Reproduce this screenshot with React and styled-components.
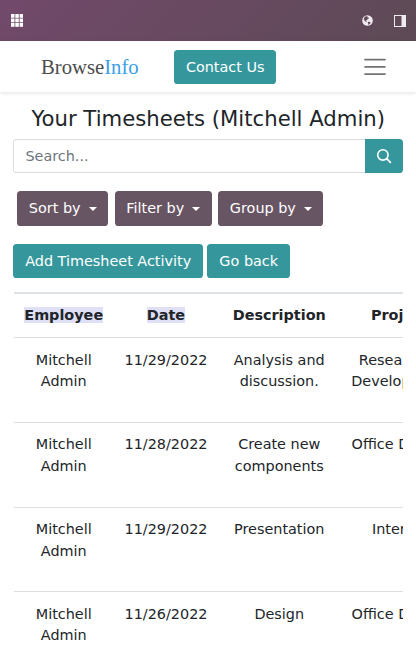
import React from "react";
import styled, { createGlobalStyle } from "styled-components";

const GlobalStyle = createGlobalStyle`
  * { box-sizing: border-box; }
  html, body { margin: 0; height: 657px; overflow: hidden; background: #fff; }
  body {
    font-family: "DejaVu Sans", sans-serif;
    font-size: 14.4px;
    line-height: 21.6px;
    color: #212529;
  }
`;

const Page = styled.div`
  width: 416px;
  height: 657px;
  overflow: hidden;
  display: flex;
  flex-direction: column;
`;

const TopBar = styled.header`
  flex: none;
  height: 41px;
  padding: 0 10px 0 11px;
  display: flex;
  align-items: center;
  justify-content: space-between;
  background: linear-gradient(135deg, #71496a 0%, #71496a 4%, #5d4a56 100%);
  svg { display: block; }
`;

const Tools = styled.div`
  display: flex;
  align-items: center;
  gap: 21px;
`;

const SiteNav = styled.nav`
  flex: none;
  height: 51px;
  padding: 0 30.5px 0 41px;
  display: flex;
  align-items: center;
  box-shadow: 0 1px 4px rgba(0, 0, 0, 0.12);
  svg { display: block; margin-left: auto; }
`;

const Logo = styled.div`
  width: 133px;
  font-family: "Liberation Serif", serif;
  font-size: 20.7px;
  line-height: 24px;
  color: #4d4d4d;
  span { color: #3a9fe5; }
`;

const Button = styled.button`
  height: 34.6px;
  width: ${(p) => p.$width}px;
  padding: 1.6px 0 0;
  border: 0;
  border-radius: 3.6px;
  background: ${(p) => (p.$muted ? "#685563" : "#35979c")};
  color: #fff;
  font: inherit;
  line-height: 21.6px;
  white-space: nowrap;
  display: flex;
  align-items: center;
  justify-content: center;
`;

const ContactButton = styled(Button)`
  margin-top: 1px;
`;

const Caret = styled.span`
  margin: 0 0 1px 8px;
  border: 4px solid transparent;
  border-top-color: #fff;
  border-bottom: 0;
`;

const Main = styled.main`
  padding: 13px 13px 0 13.4px;
  display: flex;
  flex-direction: column;
`;

const Title = styled.h1`
  margin: 0;
  height: 33.6px;
  font-size: 21.2px;
  line-height: 27px;
  font-weight: 400;
  text-align: center;
  white-space: nowrap;
`;

const Search = styled.form`
  display: flex;
  height: 34.6px;
`;

const Input = styled.input`
  flex: 1;
  min-width: 0;
  padding: 1px 11px 0;
  border: 1px solid #d8dde2;
  border-right: 0;
  border-radius: 3.6px 0 0 3.6px;
  font: inherit;
  &::placeholder { color: #6c757d; opacity: 1; }
`;

const SearchButton = styled(Button)`
  padding: 0;
  border-radius: 0 3.6px 3.6px 0;
`;

const Filters = styled.div`
  display: flex;
  gap: 6.6px;
  margin: 17.8px 0 0 3.8px;
`;

const Actions = styled.div`
  display: flex;
  gap: 4.5px;
  margin-top: 18px;
`;

const TableWrap = styled.div`
  width: 389px;
  margin: 13.8px 0 0 0.6px;
  overflow: hidden;
`;

const Table = styled.div`
  width: 446px;
  border-top: 2px solid #dee2e6;
`;

const Row = styled.div`
  display: grid;
  grid-template-columns: 99.5px 105px 121.5px 119.5px;
  height: 84.6px;
  border-bottom: 1px solid #dcdfe2;
  padding-top: 11.4px;
  text-align: center;
`;

const HeadRow = styled(Row)`
  height: 44.4px;
  padding-top: 10.6px;
  font-weight: 700;
`;

const Cell = styled.div`
  padding: 0 10px;
`;

const HeadCell = styled.div`
  white-space: nowrap;
`;

const Mark = styled.span`
  background: #dfdff5;
`;

const rows = [
  ["11/29/2022", "Analysis and discussion.", "Research & Development"],
  ["11/28/2022", "Create new components", "Office Design"],
  ["11/29/2022", "Presentation", "Internal"],
  ["11/26/2022", "Design", "Office Design"],
];

function AppsIcon() {
  return (
    <svg width="12" height="13" viewBox="0 0 12 13" fill="#fff">
      {[0, 4.5, 9].map((y) =>
        [0, 4.3, 8.6].map((x) => <rect key={`${x}-${y}`} x={x} y={y} width="3.5" height="3.8" />)
      )}
    </svg>
  );
}

function GlobeIcon() {
  return (
    <svg width="11" height="11" viewBox="0 0 11 11">
      <circle cx="5.5" cy="5.5" r="5.3" fill="#efeaee" />
      <path d="M2.4 2.2 4 1.2l1.7.1-.5 1 1.3.3.4.9-1.2.4-.8 1.3-1.1.1.3.8.9.5-.4.4-1.5-.8-1.3-1.6zM6.2 6.7l1.7.2.8.7-1 1.5-1.3.9-.2-1.5-.5-.9z" fill="#624c5b" />
    </svg>
  );
}

function PanelIcon() {
  return (
    <svg width="12" height="12" viewBox="0 0 12 12">
      <rect x=".5" y=".5" width="11" height="11" fill="none" stroke="#efeaee" />
      <rect x="7.5" y="0" width="4.5" height="12" fill="#efeaee" />
    </svg>
  );
}

function MenuIcon() {
  return (
    <svg width="22" height="18" viewBox="0 0 22 18" stroke="#737373" strokeWidth="1.75" strokeLinecap="round">
      <path d="M1 1.6h20M1 8.8h20M1 16h20" />
    </svg>
  );
}

function SearchIcon() {
  return (
    <svg width="16" height="16" viewBox="0 0 16 16" fill="none" stroke="#fff" strokeWidth="1.6">
      <circle cx="6.9" cy="6.9" r="5.2" />
      <path d="m10.7 10.7 4.1 4.1" strokeWidth="1.9" />
    </svg>
  );
}

export default function App() {
  return (
    <Page>
      <GlobalStyle />
      <TopBar>
        <AppsIcon />
        <Tools>
          <GlobeIcon />
          <PanelIcon />
        </Tools>
      </TopBar>
      <SiteNav>
        <Logo>Browse<span>Info</span></Logo>
        <ContactButton $width={102.4}>Contact Us</ContactButton>
        <MenuIcon />
      </SiteNav>
      <Main>
        <Title>Your Timesheets (Mitchell Admin)</Title>
        <Search>
          <Input placeholder="Search..." />
          <SearchButton type="button" $width={38} aria-label="Search"><SearchIcon /></SearchButton>
        </Search>
        <Filters>
          <Button $muted $width={91}>Sort by<Caret /></Button>
          <Button $muted $width={97}>Filter by<Caret /></Button>
          <Button $muted $width={105}>Group by<Caret /></Button>
        </Filters>
        <Actions>
          <Button $width={189.6}>Add Timesheet Activity</Button>
          <Button $width={82.5}>Go back</Button>
        </Actions>
        <TableWrap>
          <Table>
            <HeadRow>
              <HeadCell><Mark>Employee</Mark></HeadCell>
              <HeadCell><Mark>Date</Mark></HeadCell>
              <HeadCell>Description</HeadCell>
              <HeadCell>Project</HeadCell>
            </HeadRow>
            {rows.map(([date, description, project]) => (
              <Row key={date + description}>
                <Cell>Mitchell Admin</Cell>
                <Cell>{date}</Cell>
                <Cell>{description}</Cell>
                <Cell>{project}</Cell>
              </Row>
            ))}
          </Table>
        </TableWrap>
      </Main>
    </Page>
  );
}
